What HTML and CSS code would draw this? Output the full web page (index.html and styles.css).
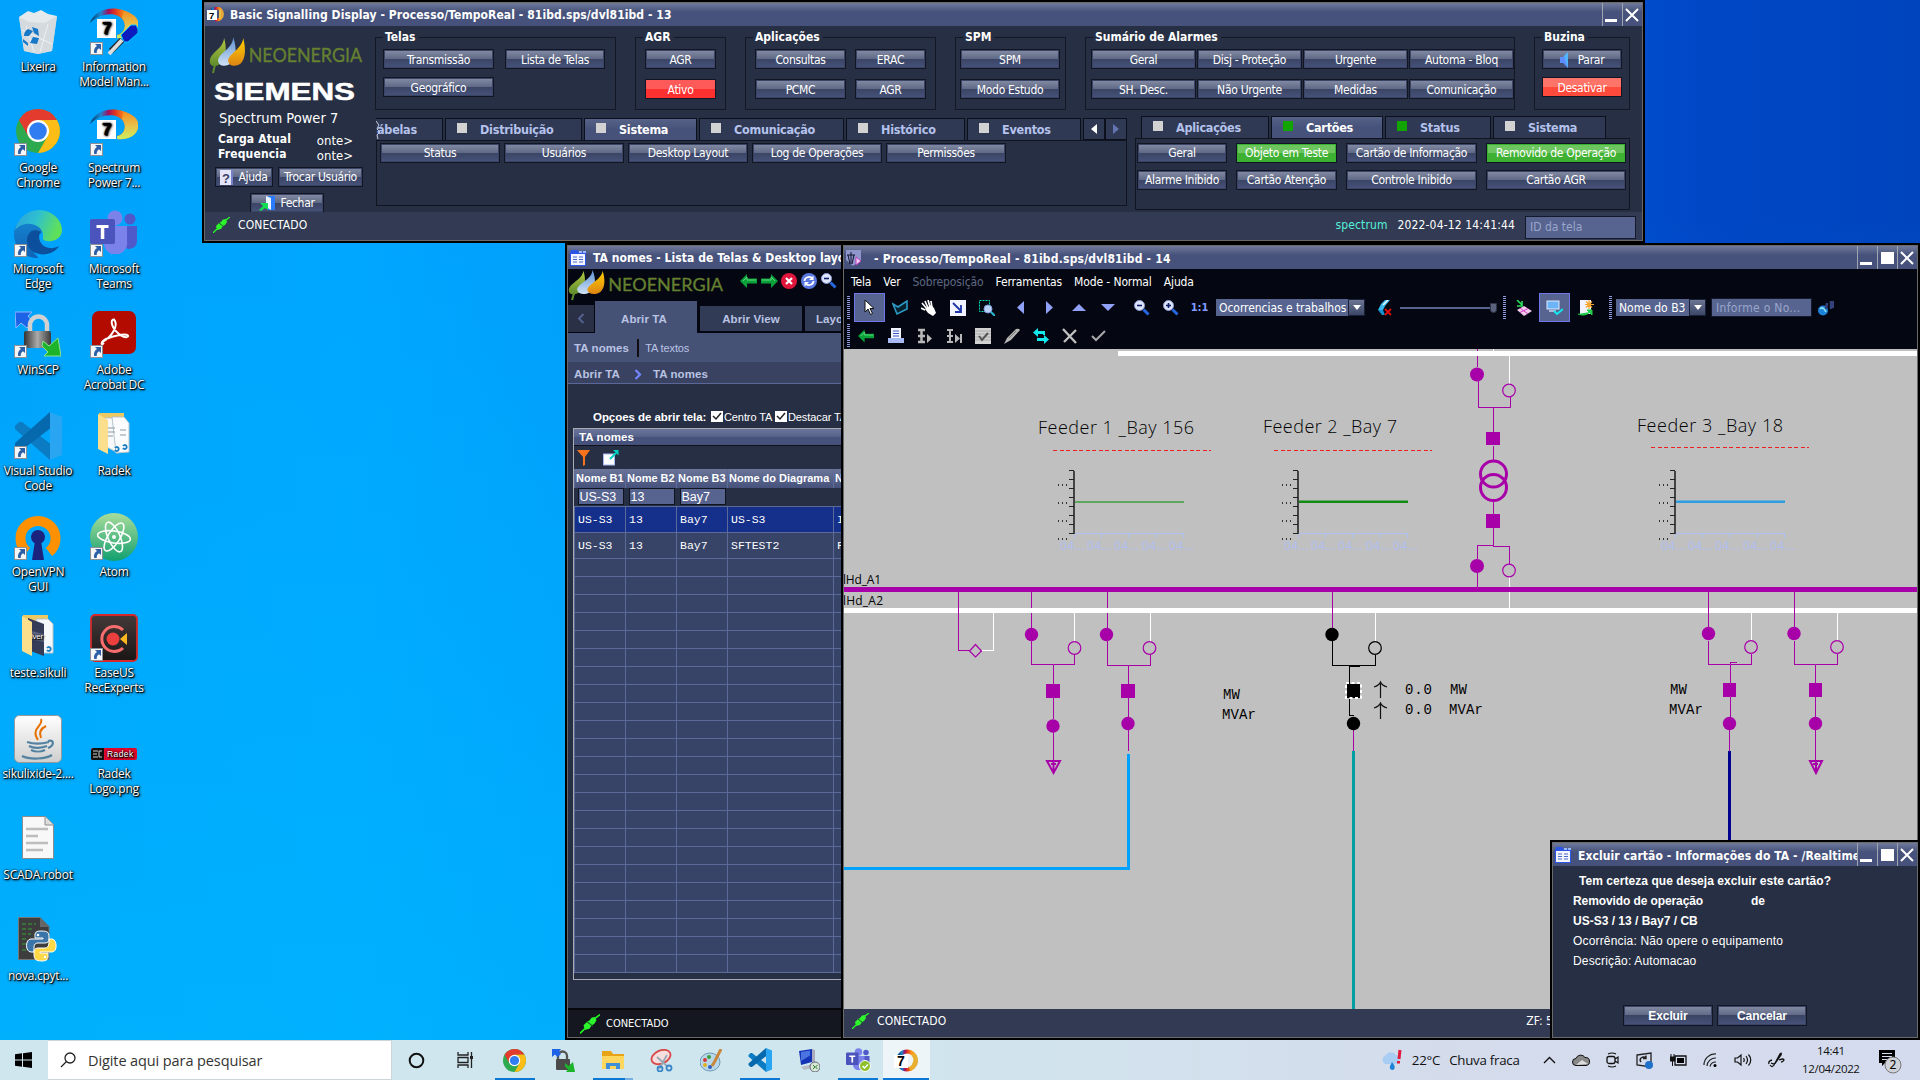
FILE: index.html
```html
<!DOCTYPE html>
<html lang="pt-BR">
<head>
<meta charset="utf-8">
<title>Spectrum Power 7</title>
<link rel="stylesheet" href="styles.css">
</head>
<body>
<svg class="defs" width="0" height="0" aria-hidden="true">
  <defs>
    <linearGradient id="gRing" x1="0" y1="0" x2="1" y2="0"><stop offset="0" stop-color="#063a66"/><stop offset=".22" stop-color="#1b86d0"/><stop offset=".38" stop-color="#a01060"/><stop offset=".52" stop-color="#e0351c"/><stop offset=".75" stop-color="#ff9a1a"/><stop offset="1" stop-color="#e0a73c"/></linearGradient>
    <linearGradient id="gRing2" x1="0" y1="0" x2="0" y2="1"><stop offset="0" stop-color="#ef8f22"/><stop offset=".5" stop-color="#e9c04a"/><stop offset="1" stop-color="#c8f060"/></linearGradient>
    <linearGradient id="gEdge" x1="0" y1="0" x2="1" y2=".3"><stop offset="0" stop-color="#2a9fe0"/><stop offset=".5" stop-color="#2fc0d0"/><stop offset="1" stop-color="#5fe05a"/></linearGradient>
    <linearGradient id="gEdge2" x1="0" y1="0" x2="0" y2="1"><stop offset="0" stop-color="#1583cf"/><stop offset="1" stop-color="#1062b6"/></linearGradient>
    <linearGradient id="gLock" x1="0" y1="0" x2="1" y2="0"><stop offset="0" stop-color="#333"/><stop offset=".5" stop-color="#aaa"/><stop offset="1" stop-color="#3a3a3a"/></linearGradient>
    <linearGradient id="gAtom" x1="0" y1="0" x2="0" y2="1"><stop offset="0" stop-color="#a9dd9a"/><stop offset="1" stop-color="#12a070"/></linearGradient>
    <linearGradient id="gDark" x1="0" y1="0" x2="0" y2="1"><stop offset="0" stop-color="#453a3a"/><stop offset="1" stop-color="#1a1616"/></linearGradient>
    <linearGradient id="gJava" x1="0" y1="0" x2="0" y2="1"><stop offset="0" stop-color="#fff"/><stop offset="1" stop-color="#cfcfcf"/></linearGradient>
    <linearGradient id="gL1" x1="0" y1="0" x2="0" y2="1"><stop offset="0" stop-color="#b4c840"/><stop offset="1" stop-color="#5c8a2c"/></linearGradient>
    <linearGradient id="gL2" x1="0" y1="0" x2="0" y2="1"><stop offset="0" stop-color="#5c8fd0"/><stop offset="1" stop-color="#cfe2f5"/></linearGradient>
    <linearGradient id="gL3" x1="0" y1="0" x2="0" y2="1"><stop offset="0" stop-color="#ffd000"/><stop offset="1" stop-color="#dd8414"/></linearGradient>

    <symbol id="shortcut" viewBox="0 0 13 13"><rect x=".5" y=".5" width="12" height="12" fill="#f4f6f8" stroke="#8b9096"/><path d="M5 2h6v6L9 6.200C7 7.500 6.500 9 6.800 11H4.200C3.500 8 4.500 5.500 7 4z" fill="#2c5fa5"/></symbol>
    <symbol id="seven" viewBox="0 0 48 34"><path d="M0 15C4 4 16-1 28 1C42 3 50 12 48 19C46 28 36 31 27 30V27C34 26 37 18 33 12C27 4 12 4 0 15z" fill="url(#gRing)"/><path d="M34 3C46 6 50 13 48 19C46 28 36 31 27 30V27C34 26 38 17 32 10z" fill="url(#gRing2)"/><rect x="7" y="11" width="19" height="19" fill="#fff"/><text x="12" y="26" font-family="Liberation Sans" font-weight="bold" font-size="17">7</text></symbol>
    <symbol id="chrome" viewBox="0 0 44 44"><circle cx="22" cy="22" r="22" fill="#2da94f"/><path d="M22 0A22 22 0 0 1 41 11H22L12.500 27.500 3 11A22 22 0 0 1 22 0z" fill="#e33b2e"/><path d="M41 11A22 22 0 0 1 22 44L31.500 27.500 31 11z" fill="#fdbd17"/><path d="M22 11H41L32 27z" fill="#fdbd17"/><circle cx="22" cy="22" r="11" fill="#fff"/><circle cx="22" cy="22" r="8.800" fill="#2f7df0"/></symbol>
    <symbol id="teams" viewBox="0 0 48 44"><circle cx="25" cy="8" r="7.500" fill="#7b83eb"/><circle cx="40" cy="9" r="5.500" fill="#5059c9"/><path d="M30 16h17v16a8 8 0 0 1-14 4z" fill="#5059c9"/><path d="M14 16h23v15a11 11 0 0 1-23 4z" fill="#7b83eb"/><rect y="9" width="25" height="25" rx="2" fill="#4b53bc"/><path d="M6.500 15h12v3h-4.200v11h-3.500V18H6.500z" fill="#fff"/></symbol>
    <symbol id="winscp" viewBox="0 0 46 46"><path d="M0 1h17l-4 4 5 6-6 6-6-5-5 5z" fill="#1d63e8" stroke="#8fb7ff"/><path d="M15 21v-7a8.500 8.500 0 0 1 17 0v7" fill="none" stroke="#d0d0d0" stroke-width="4.500"/><rect x="9" y="20" width="27" height="17" rx="2" fill="url(#gLock)"/><path d="M28 30l6 5 9-8 3 18H29l4-4-6-6z" fill="#1db32a" stroke="#8fe58f"/></symbol>
    <symbol id="winscp-small" viewBox="0 0 23 23"><path d="M6 11V7a4.500 4.500 0 0 1 9 0v4" fill="none" stroke="#555" stroke-width="2.300"/><rect x="4" y="10" width="14" height="11" rx="1" fill="#4a4a4a"/><path d="M0 0h9L7 2.500 9 5 5.500 8 3 5.500 0 8z" fill="#1d63e8"/><path d="M13 14l3.500 3L21 13l2 10H14l2-2.500-3-3z" fill="#1db32a"/></symbol>
    <symbol id="vscode" viewBox="0 0 48 48"><path d="M36 48L1 17 1 14l4-4 3 0L38 33z" fill="#0b7cc4"/><path d="M36 0L1 31v3l4 4h3L38 15z" fill="#0769ad"/><path d="M36 0l12 5v38l-12 5z" fill="#2aa5f2"/></symbol>
    <symbol id="folder" viewBox="0 0 32 43"><path d="M1 1h25v35H1z" fill="#eec860"/><path d="M7 6h13v35L7 34z" fill="#f7f9fb" stroke="#b9c4cc"/><path d="M14 5l12 0 5 6v29l-13 1z" fill="#fafcfd" stroke="#b9c4cc"/><path d="M10 16h7M10 20h7M10 24h5M22 18h6M22 23h6" stroke="#8899a3"/><path d="M0 2l10 6v34L0 37z" fill="#fbdf8c"/><path d="M17 36a2 2 0 1 1 0 2M25 34a2 2 0 1 1 0 2" fill="none" stroke="#1b7fc4" stroke-width="1.800"/></symbol>
    <symbol id="neo" viewBox="0 0 155 38"><path d="M4 37C5 30 8 24 12 19" stroke="#5c8a2c" stroke-width="2" fill="none"/><path d="M15 2C18 12 17 22 11 28 7 31 2 31 1 27-1 17 14 14 15 2z" fill="url(#gL1)"/><path d="M24 1C28 13 27 22 22 27 18 31 10 31 9 25 9 17 24 13 24 1z" fill="url(#gL2)"/><path d="M34 2C37 14 36 22 32 27 28 31 20 31 19 25 19 18 33 13 34 2z" fill="url(#gL3)"/><text x="39.500" y="26" fill="#658030" stroke="#658030" stroke-width=".35" font-family="Lato" font-size="20" textLength="112.500" lengthAdjust="spacingAndGlyphs">NEOENERGIA</text></symbol>
    <symbol id="doc" viewBox="0 0 16 16"><path d="M0 2h1V0h7v2h8v14H0z" fill="#2b56e6"/><path d="M9 1h3v2H9zM13 1h3v2h-3z" fill="#9db8ff"/><rect x="1" y="4" width="14" height="11" fill="#f3f6ff"/><path d="M3 7h4M9 7h4M3 9.500h4M9 9.500h4M3 12h4M9 12h4" stroke="#4a66c8"/></symbol>
    <symbol id="plug" viewBox="0 0 17 16"><path d="M0 16l4-4M13 3l4-3" stroke="#2f2" stroke-width="1.300"/><path d="M3 9L6 6 8 5 10 2.500 13 2 14 5 12 8 10 9 8 12 4 13z" fill="#2cf52c"/><path d="M6 6l5 4" stroke="#185c25"/></symbol>
    <symbol id="back" viewBox="0 0 18 16"><path d="M0 8L7 1V5.500H17V10.500H7V15z" fill="#0aa13a"/><path d="M3 8L7 4V7H16" fill="none" stroke="#5cdb7c"/></symbol>
    <symbol id="mag" viewBox="0 0 16 16"><circle cx="5.500" cy="5.500" r="5" fill="#dfe6ff" stroke="#8d9bd0"/><path d="M9.500 9.500l5 5" stroke="#2667e0" stroke-width="3"/><path d="M3 5.500h5" stroke="#111c66" stroke-width="1.600"/></symbol>
    <symbol id="close" viewBox="0 0 14 14"><path d="M1 1l12 12M13 1L1 13" stroke="#fff" stroke-width="2"/></symbol>
  </defs>
</svg>

<main class="desktop">
  <section class="shortcuts">
    <div class="column">
      <div class="item"><div class="pic"><svg width="48" height="48" viewBox="0 0 48 48"><path d="M5 9L14 3 20 5 27 2 34 6 43 8 38 43 24 46 10 43z" fill="#e4e9ec"/><path d="M5 9l10 5 16 1 12-7-5 35-14 3-14-3z" fill="#cfd6db" opacity=".8"/><path d="M12 18l8 26M34 16l-8 28M8 22l30 14" stroke="#f6f8f9" opacity=".8"/><path d="M10 28a8 8 0 0 1 4-7l5 2-4 5zM18 19l6 2 1 7-5-3zM25 30l-2 6-7-1 3-6zM9 31l5 4 0 3-5-4z" fill="#1878c8"/></svg></div><span>Lixeira</span></div>
      <div class="item"><div class="pic"><svg width="44" height="44"><use href="#chrome"/></svg><svg class="link"><use href="#shortcut"/></svg></div><span>Google<br>Chrome</span></div>
      <div class="item"><div class="pic"><svg width="48" height="48" viewBox="0 0 48 48"><path d="M0 24C0 12 10 8 18 12 26 14 30 20 27 24 22 18 12 28 17 38 20 45 28 49 22 48 8 47 0 36 0 24z" fill="url(#gEdge2)"/><path d="M13 30C13 40 22 46 33 44 38 43 43 40 45 36 38 40 30 38 27 33 24 28 25 24 27 22 18 17 13 24 13 30z" fill="#0c4f9c"/><path d="M1 20C5 5 16 0 26 0 40 1 48 11 48 20 48 29 39 32 33 31 28 31 29 28 29 25 29 15 12 8 1 20z" fill="url(#gEdge)"/></svg><svg class="link"><use href="#shortcut"/></svg></div><span>Microsoft<br>Edge</span></div>
      <div class="item"><div class="pic"><svg width="46" height="46"><use href="#winscp"/></svg><svg class="link"><use href="#shortcut"/></svg></div><span>WinSCP</span></div>
      <div class="item"><div class="pic"><svg width="48" height="48"><use href="#vscode"/></svg><svg class="link"><use href="#shortcut"/></svg></div><span>Visual Studio<br>Code</span></div>
      <div class="item"><div class="pic"><svg width="48" height="48" viewBox="0 0 48 48"><path d="M13 39A17.500 17.500 0 1 1 35 39" fill="none" stroke="#ff9100" stroke-width="10"/><circle cx="24" cy="24" r="7" fill="#1a237e"/><path d="M21 28h6l3 19H18z" fill="#1a237e"/></svg><svg class="link"><use href="#shortcut"/></svg></div><span>OpenVPN<br>GUI</span></div>
      <div class="item"><div class="pic"><svg width="32" height="43" viewBox="0 0 32 43"><path d="M1 1h25v35H1z" fill="#eec860"/><path d="M14 5h12l5 5v29H16z" fill="#f4f8fa" stroke="#b9c4cc"/><path d="M6 4l16 6v32L6 36z" fill="#353c58"/><path d="M9 17l13 3v8l-13-2z" fill="#5d6684"/><text x="9" y="25" font-size="8" font-family="Liberation Sans" fill="#fff">lver</text><path d="M25 34a2 2 0 1 1 0 2" fill="none" stroke="#1b7fc4" stroke-width="1.800"/><path d="M0 2l10 6v34L0 37z" fill="#fbdf8c"/></svg></div><span>teste.sikuli</span></div>
      <div class="item"><div class="pic"><svg width="48" height="48" viewBox="0 0 48 48"><rect x=".5" y=".5" width="47" height="47" rx="5" fill="url(#gJava)" stroke="#999"/><path d="M27 4C30 11 16 13 24 25M32 11C26 14 25 18 27 23" fill="none" stroke="#e76f00" stroke-width="2"/><path d="M13 27C19 29 28 29 35 27M15 31C20 34 28 33 33 31M17 35C21 37 27 37 31 35M34 26C41 24 40 31 34 33M8 41C16 45 32 44 38 40" fill="none" stroke="#5382a1" stroke-width="2.200"/></svg></div><span>sikulixide-2....</span></div>
      <div class="item"><div class="pic"><svg width="32" height="43" viewBox="0 0 32 43"><path d="M.5.500H23l8.500 8V42.500H.5z" fill="#f8f8f8" stroke="#8c8c8c"/><path d="M23 .5V9h8.500" fill="#ddd" stroke="#8c8c8c"/><path d="M4 13h22M4 20h12M4 27h22M4 34h17" stroke="#bdbdbd" stroke-width="2.500"/></svg></div><span>SCADA.robot</span></div>
      <div class="item"><div class="pic"><svg class="py" width="40" height="45" viewBox="0 0 40 45"><path d="M.5.500H22l9 9V42.500H.5z" fill="#3d3d3d" stroke="#777"/><path d="M22 .5V10h9" fill="#666"/><path d="M4 7h14M4 12h10M4 17h9M4 22h5M4 27h4M4 33h6" stroke="#37a33a" stroke-dasharray="4 2" stroke-width="1.200"/><path d="M23 14c-7 0-6 3-6 7h8v1H13c-6 0-6 13 0 13h3v-5c0-3 2-4 4-4h7c3 0 4-2 4-4 0-6 0-8-8-8z" fill="#3b74a8" stroke="#fff"/><path d="M24 44c7 0 6-4 6-8h-8v-1h12c6 0 5-13 0-13h-3v4c0 3-2 5-4 5h-7c-3 0-4 2-4 4 0 6 0 9 8 9z" fill="#ffd845" stroke="#fff"/><circle cx="20" cy="18" r="1.300" fill="#fff"/><circle cx="27" cy="40" r="1.300" fill="#fff"/></svg></div><span>nova.cpyt...</span></div>
    </div>
    <div class="column">
      <div class="item"><div class="pic"><svg width="48" height="48" viewBox="0 0 48 48"><use href="#seven" width="48" height="34"/><path d="M31 27L41 17h5l2 4v4L38 34h-4z" fill="#0a1cc0" stroke="#00c8ff"/><path d="M32 32L21 43" stroke="#222" stroke-width="6"/><path d="M32 32L19 46" stroke="#ddd" stroke-width="4"/></svg><svg class="link"><use href="#shortcut"/></svg></div><span>Information<br>Model Man...</span></div>
      <div class="item"><div class="pic"><svg width="48" height="48" viewBox="0 0 48 48"><use href="#seven" width="48" height="34"/></svg><svg class="link"><use href="#shortcut"/></svg></div><span>Spectrum<br>Power 7...</span></div>
      <div class="item"><div class="pic"><svg width="48" height="44"><use href="#teams"/></svg><svg class="link"><use href="#shortcut"/></svg></div><span>Microsoft<br>Teams</span></div>
      <div class="item"><div class="pic"><svg width="44" height="43" viewBox="0 0 44 43"><rect width="44" height="43" rx="7" fill="#b30b00"/><path d="M10 31C20 26 27 14 22 8.500 18 8 19 17 27 23 33 28 37 26 36 24.500 33 22 21 25 14 28 8 31 9 35 12 32" fill="none" stroke="#fff" stroke-width="2"/></svg><svg class="link"><use href="#shortcut"/></svg></div><span>Adobe<br>Acrobat DC</span></div>
      <div class="item"><div class="pic"><svg width="32" height="43"><use href="#folder"/></svg></div><span>Radek</span></div>
      <div class="item"><div class="pic"><svg width="48" height="48" viewBox="0 0 48 48"><circle cx="24" cy="24" r="24" fill="url(#gAtom)"/><g fill="none" stroke="#fff" stroke-width="1.600"><ellipse cx="24" cy="24" rx="16.500" ry="6" transform="rotate(8 24 24)"/><ellipse cx="24" cy="24" rx="16" ry="6" transform="rotate(66 24 24)"/><ellipse cx="24" cy="24" rx="16" ry="6" transform="rotate(-58 24 24)"/></g><circle cx="24" cy="24" r="2" fill="#fff"/></svg><svg class="link"><use href="#shortcut"/></svg></div><span>Atom</span></div>
      <div class="item"><div class="pic"><svg width="48" height="48" viewBox="0 0 48 48"><rect x="1" y="1" width="46" height="46" rx="4" fill="url(#gDark)" stroke="#d62828" stroke-width="1.800"/><path d="M33 16A12.500 12.500 0 1 0 33 34" fill="none" stroke="#f96d6d" stroke-width="3"/><circle cx="23" cy="25" r="6.500" fill="#ee3f3f"/><path d="M30 25l7-6v12z" fill="#ffb820"/></svg><svg class="link"><use href="#shortcut"/></svg></div><span>EaseUS<br>RecExperts</span></div>
      <div class="item"><div class="pic low"><svg width="46" height="12" viewBox="0 0 46 12"><rect width="46" height="12" rx="2" fill="#e1062c"/><path d="M2 0h11v12H2a2 2 0 0 1-2-2V2z" fill="#111"/><path d="M2 3h5M2 6h4M2 9h5M11 3H8v6h3" stroke="#ccc" fill="none"/><text x="16" y="9" fill="#fff" font-family="Liberation Sans" font-size="8.500" textLength="26">Radek</text></svg></div><span>Radek<br>Logo.png</span></div>
    </div>
  </section>

  <section class="window signalling">
    <header class="titlebar"><svg width="18" height="15" viewBox="0 0 18 15"><circle cx="9.500" cy="7" r="6" fill="none" stroke="url(#gRing)" stroke-width="3"/><path d="M13 3v9" stroke="#e9c04a" stroke-width="2"/><rect y="3" width="10" height="10" fill="#fff"/><text x="2" y="11.500" font-size="9.500" font-weight="bold" font-family="Liberation Sans">7</text></svg><h1>Basic Signalling Display - Processo/TempoReal - 81ibd.sps/dvl81ibd - 13</h1><div class="controls"><i class="min"></i><i><svg width="14" height="14"><use href="#close"/></svg></i></div></header>
    <div class="sig-body">
      <aside class="brand">
        <svg class="neo" width="156" height="38" viewBox="0 0 155 38" preserveAspectRatio="none"><use href="#neo" width="155" height="38"/></svg>
        <svg class="siemens" width="144" height="22" viewBox="0 0 144 22"><text x="0" y="19" fill="#fff" stroke="#fff" stroke-width=".5" font-family="Liberation Sans" font-weight="bold" font-size="23" textLength="141" lengthAdjust="spacingAndGlyphs">SIEMENS</text></svg>
        <p class="product">Spectrum Power 7</p>
        <div class="metric"><b>Carga Atual</b><span><em>onte&gt;</em></span></div>
        <div class="metric"><b>Frequencia</b><span><em>onte&gt;</em></span></div>
        <div class="brand-btns"><button><svg width="13" height="15" viewBox="0 0 13 15"><rect width="12" height="15" fill="#e4e4f8"/><path d="M12 0v15" stroke="#7781c9" stroke-width="2"/><text x="2" y="12.500" font-size="13" font-weight="bold" font-family="Liberation Sans" fill="#3a4268">?</text></svg>Ajuda</button><button>Trocar Usuário</button></div>
        <div class="exit"><button><svg width="17" height="16" viewBox="0 0 17 16"><path d="M9 1h7v14H9z" fill="#2a7bff"/><path d="M7 1l5 2v12l-5-3z" fill="#e8f4ff"/><path d="M0 15l4-4-3-3h8v7l-3-2-4 3z" fill="#12dd55"/></svg>Fechar</button></div>
      </aside>
      <div class="panels">
        <div class="groups">
          <fieldset class="g-telas"><legend>Telas</legend><button>Transmissão</button><button>Lista de Telas</button><button>Geográfico</button></fieldset>
          <fieldset class="g-agr"><legend>AGR</legend><button>AGR</button><button class="red">Ativo</button></fieldset>
          <fieldset class="g-apl"><legend>Aplicações</legend><button>Consultas</button><button>ERAC</button><button>PCMC</button><button>AGR</button></fieldset>
          <fieldset class="g-spm"><legend>SPM</legend><button>SPM</button><button>Modo Estudo</button></fieldset>
          <fieldset class="g-sum"><legend>Sumário de Alarmes</legend><button>Geral</button><button>Disj - Proteção</button><button>Urgente</button><button>Automa - Bloq</button><button>SH. Desc.</button><button>Não Urgente</button><button>Medidas</button><button>Comunicação</button></fieldset>
          <fieldset class="g-buz"><legend>Buzina</legend><button><svg width="9" height="16" viewBox="0 0 9 16"><path d="M0 5h3l5-5v16l-5-5H0z" fill="#5d8dff"/><path d="M4 4l4-4v16z" fill="#52b6ff"/></svg>Parar</button><button class="coral">Desativar</button></fieldset>
        </div>
        <div class="tabsets">
          <div class="tabset left">
            <nav class="tabs"><a class="cut" style="width:67px"><svg width="5" height="20" viewBox="0 0 5 20"><path d="M0 1l3 4-2 4 3 3-3 3 1 4" fill="none" stroke="#c8cdd8"/></svg>ábelas</a><a style="width:137px"><i></i>Distribuição</a><a class="on" style="width:113px"><i></i>Sistema</a><a style="width:145px"><i></i>Comunicação</a><a style="width:119px"><i></i>Histórico</a><a style="width:114px"><i></i>Eventos</a><span class="arrows"><b><svg width="6" height="10" viewBox="0 0 6 10"><path d="M6 0v10L0 5z" fill="#fff"/></svg></b><b><svg width="6" height="10" viewBox="0 0 6 10"><path d="M0 0v10l6-5z" fill="#6474b0"/></svg></b></span></nav>
            <div class="tab-page"><button>Status</button><button>Usuários</button><button>Desktop Layout</button><button>Log de Operações</button><button>Permissões</button></div>
          </div>
          <div class="tabset right">
            <nav class="tabs"><a style="width:128px"><i></i>Aplicações</a><a class="on" style="width:112px"><i class="green"></i>Cartões</a><a style="width:106px"><i class="green"></i>Status</a><a style="width:113px"><i></i>Sistema</a></nav>
            <div class="tab-page"><button>Geral</button><button class="lime">Objeto em Teste</button><button>Cartão de Informação</button><button class="lime">Removido de Operação</button><button>Alarme Inibido</button><button>Cartão Atenção</button><button>Controle Inibido</button><button>Cartão AGR</button></div>
          </div>
        </div>
      </div>
    </div>
    <footer class="status"><svg width="17" height="16"><use href="#plug"/></svg><span>CONECTADO</span><span class="user">spectrum</span><time>2022-04-12 14:41:44</time><span class="field">ID da tela</span></footer>
  </section>

  <section class="window names">
    <header class="titlebar"><svg width="16" height="16"><use href="#doc"/></svg><h1>TA nomes - Lista de Telas &amp; Desktop layout</h1></header>
    <div class="names-head">
      <svg width="158" height="32" viewBox="0 0 155 38" preserveAspectRatio="none"><use href="#neo" width="155" height="38"/></svg>
      <svg width="18" height="16"><use href="#back"/></svg><svg class="flip" width="18" height="16"><use href="#back"/></svg>
      <svg width="16" height="16" viewBox="0 0 16 16"><circle cx="8" cy="8" r="8" fill="#e0163c"/><path d="M5 5l6 6M11 5l-6 6" stroke="#fff" stroke-width="2.200"/></svg>
      <svg width="16" height="16" viewBox="0 0 16 16"><circle cx="8" cy="8" r="8" fill="#5a78e0"/><path d="M3.500 8a4.500 4 0 0 1 8-2.500M12.500 8a4.500 4 0 0 1-8 2.500" fill="none" stroke="#fff" stroke-width="1.800"/><path d="M12.500 2.500v4.500H8zM3.500 13.500V9H8z" fill="#fff"/></svg>
      <svg width="16" height="16"><use href="#mag"/></svg>
    </div>
    <nav class="names-tabs"><a class="prev"><svg width="8" height="11" viewBox="0 0 8 11"><path d="M6.500 1L2 5.500 6.500 10" fill="none" stroke="#55618f" stroke-width="2"/></svg></a><a class="on">Abrir TA</a><a>Abrir View</a><a class="last">Layout</a></nav>
    <div class="subnav"><b>TA nomes</b><i></i><span>TA textos</span></div>
    <div class="crumbs"><b>Abrir TA</b><svg width="8" height="11" viewBox="0 0 8 11"><path d="M1.500 1L6 5.500 1.500 10" fill="none" stroke="#7385ff" stroke-width="2.200"/></svg><b>TA nomes</b></div>
    <div class="options"><b>Opçoes de abrir tela:</b><i class="check"><svg width="12" height="11" viewBox="0 0 12 11"><path d="M2 5l3 3 5-6" fill="none" stroke="#222" stroke-width="1.500"/></svg></i><span>Centro TA</span><i class="check"><svg width="12" height="11" viewBox="0 0 12 11"><path d="M2 5l3 3 5-6" fill="none" stroke="#222" stroke-width="1.500"/></svg></i><span>Destacar TA</span></div>
    <div class="grid-panel">
      <h2>TA nomes</h2>
      <div class="grid-tools"><svg width="13" height="16" viewBox="0 0 13 16"><path d="M0 0h13L8 7v8l-2 1V7z" fill="#f8731c"/></svg><svg width="16" height="16" viewBox="0 0 16 16"><rect x=".5" y="4" width="11" height="11" fill="#fff" stroke="#aab8f0"/><path d="M7 9l6-6" stroke="#00d0c0" stroke-width="2"/><path d="M10 0h5.500v5.500z" fill="#00d0c0"/></svg></div>
      <table>
        <colgroup><col class="c1"><col class="c1"><col class="c1"><col class="c4"><col class="c5"></colgroup>
        <thead><tr><th>Nome B1</th><th>Nome B2</th><th>Nome B3</th><th>Nome do Diagrama</th><th>N</th></tr></thead>
        <tbody>
          <tr class="filter"><td><span>US-S3</span></td><td><span>13</span></td><td><span>Bay7</span></td><td></td><td></td></tr>
          <tr class="data sel"><td>US-S3</td><td>13</td><td>Bay7</td><td>US-S3</td><td>I</td></tr>
          <tr class="data"><td>US-S3</td><td>13</td><td>Bay7</td><td>SFTEST2</td><td>F</td></tr>
          <tr><td></td><td></td><td></td><td></td><td></td></tr><tr><td></td><td></td><td></td><td></td><td></td></tr><tr><td></td><td></td><td></td><td></td><td></td></tr><tr><td></td><td></td><td></td><td></td><td></td></tr><tr><td></td><td></td><td></td><td></td><td></td></tr><tr><td></td><td></td><td></td><td></td><td></td></tr>
          <tr><td></td><td></td><td></td><td></td><td></td></tr><tr><td></td><td></td><td></td><td></td><td></td></tr><tr><td></td><td></td><td></td><td></td><td></td></tr><tr><td></td><td></td><td></td><td></td><td></td></tr><tr><td></td><td></td><td></td><td></td><td></td></tr><tr><td></td><td></td><td></td><td></td><td></td></tr>
          <tr><td></td><td></td><td></td><td></td><td></td></tr><tr><td></td><td></td><td></td><td></td><td></td></tr><tr><td></td><td></td><td></td><td></td><td></td></tr><tr><td></td><td></td><td></td><td></td><td></td></tr><tr><td></td><td></td><td></td><td></td><td></td></tr><tr><td></td><td></td><td></td><td></td><td></td></tr>
          <tr><td></td><td></td><td></td><td></td><td></td></tr><tr><td></td><td></td><td></td><td></td><td></td></tr><tr><td></td><td></td><td></td><td></td><td></td></tr><tr><td></td><td></td><td></td><td></td><td></td></tr><tr><td></td><td></td><td></td><td></td><td></td></tr>
        </tbody>
      </table>
    </div>
    <footer class="names-foot"><svg width="20" height="20"><use href="#plug"/></svg><span>CONECTADO</span></footer>
  </section>

  <section class="window diagram">
    <header class="titlebar"><svg width="16" height="16" viewBox="0 0 16 16"><path d="M0 0h15v10l-8 6-7-6z" fill="#8f96cc"/><path d="M5 2v12M1 5h8M2 5l2 9M8 5l-2 9" stroke="#10142c" fill="none"/><path d="M10 15V7l5 4z" fill="#f0d0f0" stroke="#c040c0"/></svg><h1>- Processo/TempoReal - 81ibd.sps/dvl81ibd - 14</h1><div class="controls"><i class="min"></i><i class="max"></i><i><svg width="14" height="14"><use href="#close"/></svg></i></div></header>
    <nav class="menu"><a>Tela</a><a>Ver</a><a class="off">Sobreposição</a><a>Ferramentas</a><a>Mode - Normal</a><a>Ajuda</a></nav>
    <div class="toolbar first">
      <i class="grip"></i>
      <span class="tool on"><svg width="11" height="17" viewBox="0 0 11 17"><path d="M1 1v12l3-3 2.500 5.500 2-1L6 9.500h4z" fill="#fff" stroke="#111"/></svg></span>
      <span class="tool poly"><svg width="17" height="16" viewBox="0 0 17 16"><path d="M1 4l5 3 9-6 0 8-10 5z" fill="#06202e" stroke="#2c9ac4" stroke-width="1.600"/></svg></span>
      <span class="tool"><svg width="16" height="16" viewBox="0 0 16 16"><path d="M6 9L1 3M7 8L4 1M9 7L7 0M11 8l-1-7M4 10L0 8" stroke="#fff" stroke-width="1.700"/><path d="M4 9l6-4 3 3 2 5-3 3-5-3z" fill="#fff"/></svg></span>
      <span class="tool"><svg width="16" height="16" viewBox="0 0 16 16"><rect width="16" height="16" fill="#f2f4ff"/><path d="M3 3l8 8M11 5v7H5" stroke="#1c35a8" stroke-width="1.800" fill="none"/></svg></span>
      <span class="tool"><svg width="16" height="16" viewBox="0 0 16 16"><path d="M.5.500h10v11H.5z" fill="none" stroke="#00e0c0" stroke-dasharray="2 1"/><circle cx="9" cy="9" r="4" fill="#b9d0f8" stroke="#7f9be0"/><path d="M12 12l4 4" stroke="#29b8d0" stroke-width="2"/></svg></span>
      <span class="tool space"><svg width="7" height="13" viewBox="0 0 7 13"><path d="M7 0v13L0 6.500z" fill="#91a1f7"/></svg></span>
      <span class="tool"><svg width="7" height="13" viewBox="0 0 7 13"><path d="M0 0v13l7-6.500z" fill="#91a1f7"/></svg></span>
      <span class="tool"><svg width="14" height="7" viewBox="0 0 14 7"><path d="M0 7h14L7 0z" fill="#91a1f7"/></svg></span>
      <span class="tool"><svg width="14" height="7" viewBox="0 0 14 7"><path d="M0 0h14L7 7z" fill="#91a1f7"/></svg></span>
      <span class="tool space"><svg width="16" height="16"><use href="#mag"/></svg></span>
      <span class="tool"><svg width="16" height="16" viewBox="0 0 16 16"><use href="#mag" width="16" height="16"/><path d="M5.500 3v5" stroke="#111c66" stroke-width="1.600"/></svg></span>
      <span class="tool ratio">1:1</span>
      <span class="combo c-wide"><b>Ocorrencias e trabalhos</b><i></i></span>
      <span class="tool pen"><svg width="16" height="16" viewBox="0 0 16 16"><path d="M8 0h5L8 6l-2 4H1L4 4z" fill="#38b8f0"/><path d="M1 10h5l2 5H5z" fill="#1590d0"/><path d="M6 5l5-5" stroke="#e8f6ff" stroke-width="1.500"/><path d="M8 9l6 6M14 9l-6 6" stroke="#e00c0c" stroke-width="1.800"/></svg></span>
      <span class="slider"><i></i></span>
      <i class="grip g2"></i>
      <span class="tool t-paint"><svg width="17" height="16" viewBox="0 0 17 16"><path d="M1 0l5 5M6 1v5H1" stroke="#2be05b" stroke-width="1.600" fill="none"/><path d="M1 10l7-4 8 5-8 5z" fill="#f3c8ec"/><path d="M4 8l8 6M12 8.500L4 12.500" stroke="#d23cc0"/></svg></span>
      <span class="tool on"><svg width="17" height="16" viewBox="0 0 17 16"><rect x="1" y="1" width="12" height="8" fill="#6cb4f5" stroke="#dfe9ff"/><path d="M3 11h7" stroke="#c8d4f5" stroke-width="1.500"/><path d="M8 11l3 3 6-5" stroke="#10e8f0" stroke-width="2" fill="none"/></svg></span>
      <span class="tool t-new"><svg width="16" height="16" viewBox="0 0 16 16"><path d="M2 0h11v14H2z" fill="#f2f2ff"/><path d="M11 0v9M7 4.500h9M8 1.500l6 6M14 1.500l-6 6" stroke="#f4a52c" stroke-width="1.200"/><path d="M0 14c5 2 9 1 12-2M9 10h5v5z" stroke="#1fd04c" fill="#1fd04c"/></svg></span>
      <i class="grip g3"></i>
      <span class="combo c-b3"><b>Nome do B3</b><i></i></span>
      <span class="field t-find">Informe o No...</span>
      <span class="tool t-bin"><svg width="16" height="16" viewBox="0 0 16 16"><circle cx="5" cy="10.500" r="5" fill="#1b82d8"/><path d="M2 9c3-3 5 1 6 3" stroke="#8be0f0" stroke-width="1.600" fill="none"/><path d="M9 3l-1 6M13 1v8M15 1v7" stroke="#34427c" stroke-width="2.500"/></svg></span>
    </div>
    <div class="toolbar second">
      <i class="grip"></i>
      <span class="tool"><svg width="17" height="16"><use href="#back"/></svg></span>
      <span class="tool"><svg width="16" height="16" viewBox="0 0 16 16"><path d="M3 0h10v10H3z" fill="#f2f5ff"/><path d="M5 3h6M5 5.500h6M5 8h6" stroke="#3a57c8"/><path d="M0 10h16v5H0z" fill="#a7b9f5"/></svg></span>
      <span class="tool"><svg width="16" height="16" viewBox="0 0 16 16"><path d="M1 2h7M1 8h7M1 14h7M4.500 2v12" stroke="#b8b8b8" stroke-width="2.500"/><path d="M10 6v9l5-4.500z" fill="#b8b8b8"/></svg></span>
      <span class="tool"><svg width="16" height="16" viewBox="0 0 16 16"><path d="M1 2h6M1 8h6M1 14h6M4 2v12M15 6v9" stroke="#b8b8b8" stroke-width="2"/><path d="M9 6v9l5-4.500z" fill="#b8b8b8"/></svg></span>
      <span class="tool"><svg width="16" height="16" viewBox="0 0 16 16"><rect width="16" height="16" fill="#d2d2d2"/><path d="M0 3h16M0 6h16M0 9h16M0 12h16" stroke="#aaa"/><path d="M4 8l3 4 6-7" stroke="#555" stroke-width="2" fill="none"/></svg></span>
      <span class="tool"><svg width="16" height="16" viewBox="0 0 16 16"><path d="M0 16l3-6L12 1q3-1 4 1L7 12z" fill="#b5b5b5"/><path d="M5 10l7-7" stroke="#777"/></svg></span>
      <span class="tool"><svg width="16" height="16" viewBox="0 0 16 16"><path d="M0 4.500L5 0v3h7v4H10V6H5v3zM16 11.500L11 7v3H4v3h7v3z" fill="#12e8ee"/></svg></span>
      <span class="tool"><svg width="16" height="16" viewBox="0 0 16 16"><path d="M1 1l13 14M14 2L2 14" stroke="#c0c0c0" stroke-width="2.300"/></svg></span>
      <span class="tool"><svg width="16" height="12" viewBox="0 0 16 12"><path d="M1 6l4 4 9-9" stroke="#a8a8a8" stroke-width="2" fill="none"/></svg></span>
    </div>
    <svg class="canvas" width="1073" height="660" viewBox="844 349 1073 660">
      <defs>
        <g id="chart">
          <g shape-rendering="crispEdges">
            <path d="M0 .5V64" stroke="#444" stroke-width="2"/>
            <path d="M-5 .5h5M-5 9.500h5M-5 18.500h5M-5 27.500h5M-5 36.500h5M-5 45.500h5M-5 54.500h5M-5 63.500h5" stroke="#222"/>
            <path d="M1 63.500h109M.5 64v4M27.500 64v4M54.500 64v4M82.500 64v4M109.500 64v4" stroke="#b0c0f2"/>
            <path d="M-16 14.500h1m3 0h1m3 0h1M-16 32.500h1m3 0h1m3 0h1M-16 50.500h1m3 0h1m3 0h1M-16 68.500h1m3 0h1m3 0h1" stroke="#333" stroke-width="2"/>
          </g>
          <g class="ticks"><text x="-14" y="80" textLength="25">04...</text><text x="13" y="80" textLength="25">04...</text><text x="40" y="80" textLength="25">04...</text><text x="68" y="80" textLength="25">04...</text><text x="95" y="80" textLength="25">04...</text></g>
        </g>
      </defs>
      <g class="bus"><rect x="1118" y="351" width="799" height="5" fill="#fff"/><rect x="844" y="608" width="1073" height="5" fill="#fff"/><rect x="844" y="587" width="1073" height="5" fill="#a800a8"/></g>
      <g class="title" font-size="18"><text x="1038" y="434" textLength="156">Feeder 1 _Bay 156</text><text x="1263" y="433" textLength="134">Feeder 2 _Bay 7</text><text x="1637" y="432" textLength="146">Feeder 3 _Bay 18</text></g>
      <g class="title label"><text x="843" y="584" textLength="38">lHd_A1</text><text x="843" y="605" textLength="40">lHd_A2</text></g>
      <g stroke="#f02020" stroke-dasharray="4 2.500" shape-rendering="crispEdges"><path d="M1053 450.500h158M1274 450.500h158M1651 447.500h158"/></g>
      <use href="#chart" x="1074" y="470"/><use href="#chart" x="1298" y="470"/><use href="#chart" x="1675" y="470"/>
      <path d="M1075 502h109" stroke="#3f9f3f" stroke-width="1.600"/><path d="M1299 501.800h109" stroke="#158a15" stroke-width="2.600"/><path d="M1676 501.800h109" stroke="#2b9fe0" stroke-width="2.600"/>
      <g class="wire white"><path d="M1509.500 356v28M1493.500 349v2M1509.500 577v10M1509.500 592v16M993.500 613v37.500h-12M1074.500 613v29M1150.500 613v29M1375.500 613v29M1751.500 613v28M1837.500 613v28"/></g>
      <g class="wire purple">
        <path d="M1477.500 349v2M1477.500 356v11M1478.500 381v26.500h32v-11M1493.500 407v25M1493.500 446v14M1493.500 502v12M1493.500 528v18.500h16v18M1493.500 545.500h-16v14M1477.500 572v15"/>
        <path d="M958.500 592v58.500h11M1031.500 592v16M1031.500 613v15M1031.500 641v23.500h43v-10M1053.500 664v20M1053.500 698v21M1053.500 732v28"/>
        <path d="M1107.500 592v16M1107.500 613v15M1107.500 641v24.500h43v-11M1128.500 665v19M1128.500 698v19M1128.500 730v21"/>
        <path d="M1332.500 592v36M1353.500 730v21"/>
        <path d="M1708.500 592v35M1708.500 641v23.500h43v-11M1737 662.500h-6.500v20.500M1730.500 697v20M1729.500 730v21"/>
        <path d="M1794.500 592v35M1794.500 641v23.500h43v-11M1815.500 664v19M1815.500 697v20M1815.500 730v30"/>
      </g>
      <g class="wire black"><path d="M1332.500 641v24.500h43v-11M1360 666.500h-10.500v18M1349.500 699v16.500h4"/></g>
      <g fill="#a800a8">
        <circle cx="1477" cy="374.500" r="7"/><circle cx="1477" cy="566" r="7"/><rect x="1486" y="432" width="14" height="13"/><rect x="1486" y="514" width="14" height="14"/>
        <circle cx="1031.500" cy="634.500" r="6.700"/><circle cx="1106.500" cy="634.500" r="6.700"/><circle cx="1708.500" cy="633.500" r="6.700"/><circle cx="1794" cy="633.500" r="6.700"/>
        <rect x="1046" y="684" width="14" height="14"/><rect x="1121" y="684" width="14" height="14"/><rect x="1723" y="683" width="13" height="14"/><rect x="1809" y="683" width="13" height="14"/>
        <circle cx="1053" cy="726" r="6.700"/><circle cx="1128" cy="723.500" r="6.700"/><circle cx="1729.500" cy="723.500" r="6.700"/><circle cx="1815.500" cy="723.500" r="6.700"/>
      </g>
      <g fill="none" stroke="#a800a8" stroke-width="1.200">
        <circle cx="1509" cy="390.500" r="6.300"/><circle cx="1509" cy="570.500" r="6.300"/><circle cx="1074.500" cy="648" r="6.300"/><circle cx="1149.500" cy="648" r="6.300"/><circle cx="1751" cy="647" r="6.300"/><circle cx="1837" cy="647" r="6.300"/>
        <path d="M975.500 644.500l6 6.500-6 6-6-6z"/>
        <path d="M1047 761h13l-6.500 12zM1051 764h5M1053.500 761v10M1810 761h12l-6 12zM1813 764h5M1816 761v10" stroke-width="2"/>
      </g>
      <g fill="none" stroke="#a800a8" stroke-width="3"><circle cx="1493.500" cy="474" r="13"/><circle cx="1493.500" cy="487.500" r="13"/></g>
      <circle cx="1332" cy="634.500" r="6.700"/><circle cx="1353.500" cy="723.500" r="6.700"/><circle cx="1375" cy="648" r="6.300" fill="none" stroke="#000" stroke-width="1.200"/>
      <rect x="1347" y="684" width="13" height="14"/><rect x="1346" y="683" width="15" height="15" fill="none" stroke="#fff" stroke-width="2" stroke-dasharray="3 2.500"/>
      <path d="M1380.500 682v16M1380.500 703v16M1374 687q5-1.500 6.500-5 1.500 3.500 6.500 5M1374 708q5-1.500 6.500-5 1.500 3.500 6.500 5" fill="none" stroke="#111" stroke-width="1.200"/>
      <g fill="none" stroke-width="3"><path d="M844 868.500h284.500V754" stroke="#00a2ff"/><path d="M1353.500 751v258" stroke="#00a0a0"/><path d="M1729.500 751v90" stroke="#000090"/></g>
      <g class="mono"><text x="1223" y="699" textLength="17">MW</text><text x="1222" y="719" textLength="34">MVAr</text><text x="1405" y="694" textLength="27">0.0</text><text x="1450" y="694" textLength="17">MW</text><text x="1405" y="714" textLength="27">0.0</text><text x="1449" y="714" textLength="34">MVAr</text><text x="1670" y="694" textLength="17">MW</text><text x="1669" y="714" textLength="34">MVAr</text></g>
    </svg>
    <footer class="status"><svg width="17" height="16"><use href="#plug"/></svg><span>CONECTADO</span><span class="zf">ZF: 5</span></footer>
  </section>

  <section class="window dialog">
    <header class="titlebar"><svg width="16" height="16"><use href="#doc"/></svg><h1>Excluir cartão - Informações do TA - /Realtime</h1><div class="controls"><i class="min"></i><i class="max"></i><i><svg width="14" height="14"><use href="#close"/></svg></i></div></header>
    <div class="dialog-body"><p class="ask"><b>Tem certeza que deseja excluir este cartão?</b></p><p class="pair"><b>Removido de operação</b><b>de</b></p><p><b>US-S3 / 13 / Bay7 / CB</b></p><p class="note">Ocorrência: Não opere o equipamento</p><p class="note">Descrição: Automacao</p><div class="actions"><button>Excluir</button><button>Cancelar</button></div></div>
  </section>

  <footer class="taskbar">
    <span class="start"><svg width="17" height="16" viewBox="0 0 17 16"><path d="M0 2.300L7 1.300v6.200H0zM8 1.200L17 0v7.500H8zM0 8.500h7v6.200L0 13.700zM8 8.500h9V16l-9-1.200z"/></svg></span>
    <span class="search"><svg width="16" height="16" viewBox="0 0 16 16"><circle cx="10" cy="6" r="5" fill="none" stroke="#222" stroke-width="1.300"/><path d="M6.500 9.500L1 15" stroke="#222" stroke-width="1.300"/></svg>Digite aqui para pesquisar</span>
    <span class="task t0"><svg width="17" height="17" viewBox="0 0 17 17"><circle cx="8.500" cy="8.500" r="6.800" fill="none" stroke="#111" stroke-width="2"/></svg></span>
    <span class="task"><svg width="17" height="16" viewBox="0 0 17 16"><path d="M1 0v3h10V0M1 16v-3h10v3M1 5.500h10v5H1zM14.500 0v16" fill="none" stroke="#222" stroke-width="1.300"/><rect x="13" y="4" width="3" height="3" fill="#222"/></svg></span>
    <span class="task run"><svg width="23" height="23"><use href="#chrome"/></svg></span>
    <span class="task"><svg width="23" height="23"><use href="#winscp-small"/></svg></span>
    <span class="task run multi"><svg width="22" height="19" viewBox="0 0 22 19"><path d="M0 0h9l2 3h11v15H0z" fill="#e8a317"/><path d="M0 5h22v13H0z" fill="#ffd75e"/><path d="M4 18v-6h14v6h-4v-3H8v3z" fill="#3f8fd8"/></svg></span>
    <span class="task"><svg width="24" height="23" viewBox="0 0 24 23"><ellipse cx="11" cy="8" rx="10" ry="6.500" transform="rotate(-25 11 8)" fill="#f7dede" stroke="#d84848" stroke-width="1.800"/><path d="M7 8l11 10M17 6L9 20" stroke="#99a8b5" stroke-width="1.800"/><circle cx="19" cy="19" r="2.500" fill="none" stroke="#3a86c8" stroke-width="1.800"/><circle cx="10" cy="20" r="2.500" fill="none" stroke="#3a86c8" stroke-width="1.800"/></svg></span>
    <span class="task"><svg width="23" height="23" viewBox="0 0 23 23"><ellipse cx="10" cy="13" rx="10" ry="9" fill="#b8d8ea" stroke="#6d9ab5"/><circle cx="5" cy="11" r="2" fill="#d23b3b"/><circle cx="9" cy="8" r="2" fill="#3aa03a"/><circle cx="5" cy="16" r="2" fill="#e0b020"/><circle cx="10" cy="18" r="2" fill="#3060c0"/><path d="M21 0l-6 12-3 5" stroke="#c8873c" stroke-width="3"/></svg></span>
    <span class="task run"><svg width="24" height="24"><use href="#vscode"/></svg></span>
    <span class="task"><svg width="22" height="23" viewBox="0 0 22 23"><path d="M1 2l13-2v13L3 16z" fill="#1434b8"/><path d="M3 3l9-1.500v5L3 12z" fill="#4a74e0"/><path d="M14 0l3 1v12l-3 1z" fill="#aab"/><path d="M3 18l12-3 3 3-12 3z" fill="#b8bcc4"/><circle cx="17" cy="18" r="5" fill="#d8e8d8" stroke="#667"/><path d="M15 16l2 2-2 2M19.500 16l-2 2 2 2" stroke="#2a7a2a" fill="none"/></svg></span>
    <span class="task run"><svg width="25" height="24" viewBox="0 0 25 24"><use href="#teams" width="24" height="22"/><circle cx="19" cy="18" r="5.500" fill="#8dc02c" stroke="#fff"/><path d="M16.500 18l2 2 3.500-3.500" stroke="#fff" fill="none" stroke-width="1.500"/></svg></span>
    <span class="task run active"><svg width="24" height="23" viewBox="0 0 24 23"><circle cx="13" cy="11.500" r="9" fill="none" stroke="url(#gRing)" stroke-width="4"/><path d="M19 5c4 4 3 11-3 15" stroke="#e9b030" stroke-width="4" fill="none"/><rect y="6" width="14" height="13" fill="#fff"/><text x="3" y="17" font-size="14" font-weight="bold" font-family="Liberation Sans">7</text></svg></span>
    <span class="weather"><svg width="22" height="22" viewBox="0 0 22 22"><path d="M3 15a5 5 0 0 1 1-9 6 6 0 0 1 10 0c4 1 5 8 0 9z" fill="#a9cdf2"/><path d="M10 13q5 6 1 8-4 0-3-4z" fill="#1f84d8"/><path d="M18 1l-1 9M16.500 12v2.500" stroke="#e01b3c" stroke-width="3"/></svg><b>22°C</b><b>Chuva fraca</b></span>
    <span class="tray">
      <svg width="13" height="8" viewBox="0 0 13 8"><path d="M1 7l5.500-5.500L12 7" fill="none" stroke="#111" stroke-width="1.400"/></svg>
      <svg width="18" height="12" viewBox="0 0 18 12"><path d="M4 11.500a3.500 3.500 0 0 1 0-7 5 5 0 0 1 9-1 4 4 0 0 1 1 8z" fill="#888" stroke="#111"/><path d="M4 11l6-5 6 4z" fill="#ddd"/></svg>
      <svg width="14" height="16" viewBox="0 0 14 16"><rect x="1" y="4.500" width="8" height="7" rx="2" fill="none" stroke="#111" stroke-width="1.300"/><path d="M9 7l3-2v6l-3-2M2 2q4-2 8 0M2 14q4 2 8 0" fill="none" stroke="#111" stroke-width="1.200"/></svg>
      <svg width="18" height="17" viewBox="0 0 18 17"><path d="M1 3l14-2v14l-14-2z" fill="none" stroke="#222" stroke-width="1.300"/><path d="M5 10a3 3 0 0 1 0-4q3-2 5 0M10 3.500v3H7" fill="none" stroke="#222" stroke-width="1.400"/><circle cx="13" cy="13" r="4" fill="#1f70c8"/></svg>
      <svg width="17" height="13" viewBox="0 0 17 13"><path d="M5 2h11v9H5z" fill="none" stroke="#111" stroke-width="1.300"/><path d="M7 4h7v5H7z"/><path d="M1 0v3M4 0v3M0 3h5v4H0zM2.500 7v5" fill="#111" stroke="#111"/></svg>
      <svg width="15" height="14" viewBox="0 0 15 14"><g fill="none" stroke="#222" stroke-width="1.200"><path d="M1 12A11 11 0 0 1 13 1M4 13A8.500 8.500 0 0 1 13 5M7 13.500A6 6 0 0 1 13 9"/></g><circle cx="12" cy="12.500" r="1.500"/></svg>
      <svg width="18" height="14" viewBox="0 0 18 14"><path d="M1 5h2.500L7 2v10L3.500 9H1zM9.500 5q1.500 2 0 4M12 3q3 4 0 8M14.500 1.500q4.500 5.500 0 11" fill="none" stroke="#111" stroke-width="1.200"/></svg>
      <svg width="18" height="16" viewBox="0 0 18 16"><path d="M2 13q2 3 4 0L12 2q2-2 1 1L8 10q-1 3-5 1M1 12q-1-3 3-4M11 8q5-2 5 0-1 2-3 2" fill="none" stroke="#111" stroke-width="1.300"/></svg>
    </span>
    <span class="clock">14:41<br>12/04/2022</span>
    <span class="notes"><svg width="24" height="24" viewBox="0 0 24 24"><path d="M0 0h16v13H6l-3 3v-3H0z"/><path d="M3 3.500h10M3 6.500h10M3 9.500h7" stroke="#d8dff0"/><circle cx="14" cy="15" r="8" fill="#cfd2d8" stroke="#777"/><text x="14" y="19" text-anchor="middle" font-family="Noto Sans" font-size="12">2</text></svg></span>
  </footer>
</main>
</body>
</html>
```

FILE: styles.css
```css
* { box-sizing: border-box; }
html, body { margin: 0; height: 100%; overflow: hidden; }
body { font-family: "DejaVu Sans Condensed", "DejaVu Sans", sans-serif; font-size: 12px; color: #fff; }
h1, h2, p { margin: 0; font-size: inherit; }
svg { display: block; flex: none; font-stretch: normal; }
i, em { font-style: normal; }
.defs { position: absolute; }

.desktop { position: relative; width: 1920px; height: 1080px; overflow: hidden; background: linear-gradient(180deg, rgba(0,190,255,0) 20%, rgba(0,190,255,.5) 100%), linear-gradient(90deg, #00a2fb 0, #00a6ff 350px, #009af8 700px, #0062dc 1400px, #0047c6 1700px, #0044bd 1920px); }

/* Desktop shortcuts */
.shortcuts { display: flex; padding-top: 6px; }
.column { width: 76px; }
.item { height: 101px; width: 76px; display: flex; flex-direction: column; align-items: center; font: 12px/15px "Open Sans", sans-serif; letter-spacing: -.25px; text-align: center; text-shadow: 1px 1px 1px #000, 1px 1px 3px #000, 0 0 2px #000; white-space: nowrap; }
.pic { position: relative; width: 48px; height: 52.5px; display: flex; align-items: flex-start; justify-content: center; padding-top: 2px; }
.pic.low { padding-top: 35px; }
.link { position: absolute; left: 0; bottom: 4px; width: 13px; height: 13px; }

/* Window chrome */
.window { position: absolute; display: flex; flex-direction: column; border: 1px solid #6a6a6a; outline: 2px solid #000; background: #272f44; overflow: hidden; font-stretch: condensed; }
.titlebar { height: 23px; flex: none; display: flex; align-items: center; padding-left: 2px; background: linear-gradient(#717a9b 0, #46527b 9px); }
.titlebar h1 { flex: 1; padding: 1px 0 0 7px; font-size: 12px; font-weight: bold; letter-spacing: .08px; white-space: nowrap; overflow: hidden; }
.signalling .titlebar h1 { padding-left: 5px; }
.controls { display: flex; align-self: stretch; }
.controls i { width: 20px; border-left: 1px solid #a0a4ae; display: flex; align-items: center; justify-content: center; padding-right: 2px; }
.controls .min { padding-right: 4px; }
.controls .max { padding-right: 0; }
.controls .min::after { content: ""; width: 12px; height: 3px; margin-top: 11px; background: #fff; }
.controls .max::after { content: ""; width: 13px; height: 12px; background: #fff; }

button { font: inherit; font-stretch: condensed; color: #fff; height: 20px; padding: 1px 0 0; border: 1px solid #121624; box-shadow: inset 0 0 0 1px #3a4566; background: linear-gradient(#858da5 0, #5f6885 50%, #3a4464 50%, #48537c 100%); display: flex; align-items: center; justify-content: center; white-space: nowrap; letter-spacing: -.3px; }
.red { background: linear-gradient(#ff5a5a 50%, #ff3030 50%); box-shadow: none; }
.coral { background: linear-gradient(#ff7468 50%, #ff4a3c 50%); box-shadow: none; }
.lime { background: linear-gradient(#6cc55e 50%, #3fb132 50%); box-shadow: inset 0 0 0 1px #38b030; }

/* Signalling window */
.signalling { left: 204px; top: 2px; width: 1439px; height: 239px; }
.sig-body { display: flex; height: 186px; overflow: hidden; }
.brand { width: 170px; flex: none; padding: 10px 0 0 4px; }
.siemens { margin: 7px 0 0 5px; }
.product { margin: 6px 0 0 10px; font-size: 14.500px; line-height: 18px; white-space: nowrap; }
.metric { display: flex; height: 13px; margin: 6px 0 0 9px; overflow: hidden; line-height: 13px; }
.metric + .metric { margin-top: 2px; }
.metric b { width: 99px; letter-spacing: .15px; }
.metric span { width: 36px; display: flex; justify-content: flex-end; font-size: 13px; line-height: 15px; }
.brand-btns { display: flex; gap: 5px; margin: 6px 0 0 6px; }
.brand-btns button { padding: 0; }
.brand-btns button:first-child { width: 58px; gap: 5px; }
.brand-btns button:last-child { width: 85px; }
.exit { margin: 6px 0 0 41px; }
.exit button { width: 74px; gap: 4px; padding-top: 0; }
.panels { flex: 1; }
.groups { display: flex; gap: 19px; padding-top: 3px; height: 84px; }
fieldset { min-width: 0; margin: 0; height: 81px; border: 1px solid #141824; padding: 4px 0 0 var(--pad); display: grid; align-content: start; justify-content: start; grid-auto-rows: 20px; row-gap: 10px; }
legend { padding: 0 3px 0 2px; margin-left: calc(7px - var(--pad)); height: 16px; line-height: 16px; font-weight: bold; letter-spacing: 0; }
.g-telas { --pad: 7px; width: 241px; grid-template-columns: 111px 100px; column-gap: 11px; row-gap: 8px; }
.g-agr { --pad: 9px; width: 91px; grid-template-columns: 71px; }
.g-apl { --pad: 9px; width: 191px; grid-template-columns: 91px 71px; column-gap: 9px; }
.g-spm { --pad: 4px; width: 111px; grid-template-columns: 100px; }
.g-sum { --pad: 5px; width: 430px; grid-template-columns: repeat(4, 105px); column-gap: 1px; }
.g-buz { --pad: 7px; width: 96px; grid-template-columns: 80px; row-gap: 8px; }
.g-buz button:first-of-type { gap: 9px; }
.tabsets { display: flex; gap: 8px; padding: 6px 0 0 1px; }
.tabset.left { width: 751px; padding-top: 2px; }
.tabset.right { width: 495px; }
.tabs { display: flex; gap: 2px; height: 22px; }
.right .tabs { padding-left: 6px; }
.tabs a { flex: none; display: flex; align-items: center; border: 1px solid #0c101c; border-bottom: 0; background: #303954; color: #b4c2ec; font-weight: bold; font-size: 12.500px; letter-spacing: -.25px; padding-left: 11px; gap: 13px; overflow: hidden; }
.tabs a i { width: 10px; height: 10px; background: #d2d2d2; margin-top: -4px; }
.tabs a i.green { background: #12a400; }
.tabs a.on { background: linear-gradient(#566286, #46527a 50%, #46527a); color: #fff; }
.tabs a.cut { padding-left: 0; border-left: 0; gap: 0; }
.tabs a.cut svg { margin-right: -4px; }
.arrows { display: flex; }
.arrows b { width: 22px; border: 1px solid #0c101c; display: flex; align-items: center; justify-content: center; background: #303954; }
.tab-page { border: 1px solid #10141f; }
.left .tab-page { height: 66px; padding: 2px 3px; display: grid; grid-template-columns: 120px 120px 120px 130px 120px; column-gap: 4px; align-items: start; }
.left .tab-page button { padding-top: 0; }
.right .tab-page { height: 72px; padding: 3.500px 0 0 1px; display: grid; grid-template-columns: 90px 101px 131px 140px; column-gap: 9px; row-gap: 7px; align-content: start; }
.right .tab-page button { padding-top: 0; }
.status { height: 28px; flex: none; display: flex; align-items: center; padding: 0 0 2px 8px; background: #323a54; white-space: nowrap; }
.status span:first-of-type { margin-left: 8px; letter-spacing: .1px; }
.user { margin-left: auto; color: #54f0d8; letter-spacing: .1px; }
.status time { margin: 0 10px 0 10px; letter-spacing: .15px; }
.field { display: flex; align-items: center; background: #56648f; border: 1px solid #141a2c; color: #9aa6cb; padding-left: 4px; }
.status .field { width: 111px; height: 23px; margin-right: 6px; margin-top: 4px; padding-bottom: 1px; }

/* Names window */
.names { left: 567px; top: 245px; width: 500px; height: 793px; }
.names-head { height: 32px; flex: none; display: flex; background: #040711; }
.names-head svg:not(:first-child) { margin: 4px 2px 0; }
.names-head svg:nth-child(2) { margin-left: 14px; }
.names-head svg:nth-child(3) { margin: 4px 1px 0 0; }
.flip { transform: scaleX(-1); }
.names-tabs { height: 32px; flex: none; display: flex; align-items: flex-end; background: #040711; font: bold 11.500px "Liberation Sans", sans-serif; letter-spacing: .1px; color: #b9c3e4; }
.names-tabs a { display: flex; align-items: center; justify-content: center; width: 102px; height: 25px; margin: 0 0 2px 3px; background: #323b55; }
.names-tabs a.on { height: 32px; margin: 0 0 0 1px; padding: 3px 4px 0 0; background: #465176; }
.names-tabs a.prev { width: 26px; height: 27px; margin: 0 0 1px 0; background: #2a3046; }
.names-tabs a.last { width: 200px; justify-content: flex-start; padding-left: 11px; }
.subnav, .crumbs { flex: none; display: flex; align-items: center; padding-left: 6px; font: 11px "Liberation Sans", sans-serif; color: #b9c3e4; }
.subnav { height: 29px; background: #465176; letter-spacing: -.1px; }
.subnav b, .crumbs b { font-size: 11.500px; letter-spacing: .1px; }
.subnav i { width: 2px; height: 18px; margin: 0 6px 0 8px; background: #120d14; }
.crumbs { height: 22px; padding-top: 2px; background: #394260; border-bottom: 1px solid #5a6798; }
.crumbs svg { margin: 1px 11px 0 14px; }
.options { height: 44px; flex: none; padding: 21px 0 0 25px; display: flex; align-items: center; font: 11px "Liberation Sans", sans-serif; white-space: nowrap; }
.options b { font-size: 11.500px; width: 115px; flex: none; letter-spacing: -.05px; }
.options span { width: 48px; flex: none; letter-spacing: -.1px; }
.options span:last-child { width: auto; }
.check { width: 12px; height: 11px; margin: 0 1px 0 3px; background: #fff; flex: none; }
.grid-panel { flex: none; height: 552px; margin-left: 5px; border: 1px solid #a9abb0; border-right: 0; }
.grid-panel h2 { height: 17px; padding-left: 5px; background: linear-gradient(#6b7599, #56618a 50%, #46527b 50%); border-bottom: 1px solid #10131d; font: bold 11.500px/16px "Liberation Sans", sans-serif; letter-spacing: .1px; }
.grid-tools { height: 23px; padding: 4px 0 0 3px; display: flex; gap: 13px; }
table { border-collapse: collapse; table-layout: fixed; width: 420px; }
.c1 { width: 51px; } .c4 { width: 106px; } .c5 { width: 161px; }
th { height: 19px; padding: 0 0 2px 1px; border: 1px solid #5f6b98; border-width: 0 1px; background: linear-gradient(#6b7599, #46527b); font: bold 11px "Liberation Sans", sans-serif; text-align: left; white-space: nowrap; }
td { height: 18px; padding: 0 0 0 3px; border: 1px solid #5c6a9a; background: #374468; }
.filter td { border-width: 0 0 1px; background: #272f44; padding: 0 1px 0 3px; }
.filter span { display: block; width: 46px; height: 17px; border: 1px solid #10141f; background: #56648f; font: 12.500px/17px "Liberation Sans", sans-serif; padding-left: 1px; }
.data td { height: 26px; font: 11.500px "Liberation Mono", monospace; }
.data.sel td { background: #15308a; }
.names-foot { flex: none; display: flex; align-items: center; gap: 6px; margin-top: 28px; height: 30px; padding: 0 0 1px 12px; border-top: 2px solid #05070c; background: #141720; font-size: 11px; }

/* Diagram window */
.diagram { left: 843px; top: 245px; width: 1075px; height: 793px; }
.diagram .titlebar h1 { padding: 2px 0 0 12px; letter-spacing: .2px; }
.menu { height: 24px; flex: none; display: flex; align-items: center; gap: 12px; padding: 1px 0 0 7px; background: #040711; white-space: nowrap; letter-spacing: -.12px; }
.menu .off { color: #5f6883; }
.toolbar { flex: none; display: flex; align-items: center; background: #040711; }
.toolbar.first { height: 29px; }
.toolbar.second { height: 27px; }
.grip { width: 3px; height: 24px; margin: 0 4px 0 3px; background: repeating-linear-gradient(#8d9bdc 0 1px, #040711 1px 2px); flex: none; }
.second .grip { margin-right: 2px; }
.tool { width: 29px; flex: none; display: flex; justify-content: center; align-items: center; height: 29px; }
.tool.on { width: 31px; background: #56648f; border: 1px solid #7077e8; }
.tool.poly { margin-left: 1px; }
.poly + .tool { margin-left: -1px; }
.tool.space { margin-left: 5px; }
.ratio { color: #7f9bff; font-weight: bold; font-size: 11px; }
.combo { display: flex; height: 17px; flex: none; white-space: nowrap; }
.combo b { font-weight: normal; background: #56648f; padding-left: 3px; line-height: 19px; overflow: hidden; }
.combo i { width: 17px; background: linear-gradient(#6c7593, #3c4667); border: 1px solid #1a2036; display: flex; align-items: center; justify-content: center; }
.combo i::after { content: ""; border: 4px solid transparent; border-top: 5px solid #fff; border-bottom: 0; }
.c-wide { margin-left: 2px; letter-spacing: -.05px; }
.c-wide b { width: 132px; }
.c-b3 b { width: 73px; }
.pen { margin-left: 5px; }
.slider { width: 97px; height: 11px; margin-left: 1px; display: flex; align-items: center; background: linear-gradient(#56648f, #56648f) 0 50% / 90px 2px no-repeat; justify-content: flex-end; }
.slider i { width: 7px; height: 10px; background: #5a627c; border: 1px solid #30364a; border-radius: 0 0 4px 4px; }
.g2 { margin: 0 3px 0 6px; }
.t-paint { width: 30px; }
.t-new { width: 31px; }
.g3 { margin: 0 4px 0 8px; }
.t-find { width: 101px; height: 19px; margin-left: 5px; letter-spacing: .3px; white-space: nowrap; }
.t-bin { width: 28px; }
.canvas { background: #c0c0c0; }
.title { font-family: "Open Sans", sans-serif; font-weight: 300; fill: #000; }
.title.label { font-weight: 400; font-size: 12px; }
.ticks { font: 400 12px "Open Sans", sans-serif; fill: #b0bff2; }
.wire { fill: none; stroke-width: 1; shape-rendering: crispEdges; }
.white { stroke: #fff; }
.purple { stroke: #a800a8; }
.black { stroke: #000; }
.mono { font: 14px "Liberation Mono", monospace; fill: #000; }
.diagram .status { padding-bottom: 5px; }
.diagram .status .zf { margin-left: 580px; padding-top: 1px; }

/* Confirmation dialog */
.dialog { left: 1552px; top: 842px; width: 366px; height: 196px; }
.dialog .titlebar h1 { padding: 2px 0 0 7px; letter-spacing: .08px; }
.dialog-body { padding: 5px 0 0 20px; font: 12px/20px "Liberation Sans", sans-serif; white-space: nowrap; }
.ask { padding-left: 6px; letter-spacing: .05px; }
.note { letter-spacing: .17px; }
.pair { display: flex; gap: 48px; letter-spacing: -.1px; }
.actions { display: flex; gap: 4px; margin: 34px 0 0 50px; }
.actions button { width: 90px; height: 21px; font-weight: bold; letter-spacing: -.1px; padding-top: 0; }

/* Taskbar */
.taskbar { position: absolute; left: 0; right: 0; top: 1040px; height: 40px; display: flex; align-items: center; background: linear-gradient(90deg, #cfe6ee 0, #d0e6ee 45%, #d4dcec 75%, #d5dbee 100%); color: #111; font-family: "Open Sans", sans-serif; white-space: nowrap; }
.start { width: 48px; padding-left: 15px; }
.search { width: 344px; height: 40px; background: #fff; border: 1px solid #cdd5d9; border-left-width: 0; display: flex; align-items: center; gap: 12px; padding-left: 12px; font-size: 14.500px; letter-spacing: -.1px; color: #333; }
.task { width: 49.1px; height: 40px; flex: none; display: flex; align-items: center; justify-content: center; }
.t0 { width: 48px; margin-right: 1px; }
.run { background: linear-gradient(#0a78d4, #0a78d4) 50% 100% / 40px 2px no-repeat; }
.multi { background-image: linear-gradient(90deg, #0a78d4 32px, #76b0e2 32px); }
.active { background: linear-gradient(#0a78d4, #0a78d4) 50% 100% / 46px 2px no-repeat, #eef5f8; width: 47px; }
.weather { display: flex; align-items: center; flex: none; margin-left: 452px; font-size: 13.300px; width: 161px; letter-spacing: -.25px; }
.weather b { font-weight: normal; margin-left: 8px; }
.weather b + b { margin-left: 9px; }
.tray { display: flex; flex: none; align-items: center; justify-content: space-between; width: 243px; }
.clock { width: 90px; flex: none; text-align: center; font-size: 11.500px; line-height: 18px; letter-spacing: -.35px; }
.notes { margin-left: 3px; padding: 3px 5px 0 0; flex: none; }
```
